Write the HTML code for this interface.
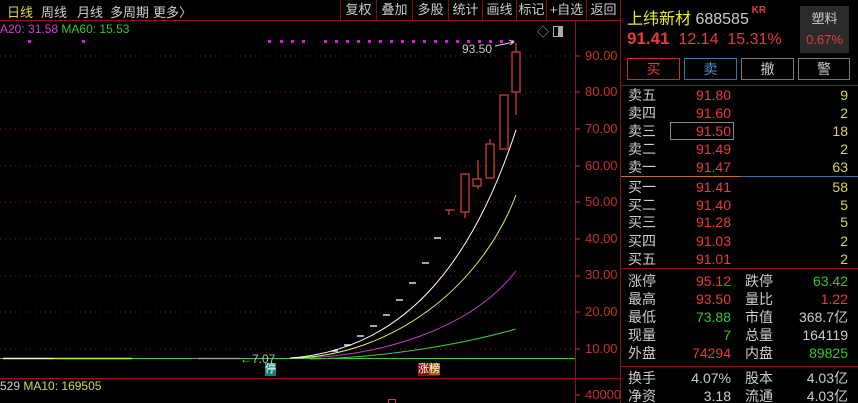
<!DOCTYPE html>
<html><head><meta charset="utf-8">
<style>
*{margin:0;padding:0;box-sizing:border-box}
html,body{width:858px;height:403px;overflow:hidden}
body{background:#000;position:relative;font-family:"Liberation Sans","Noto Sans CJK SC",sans-serif;font-size:13px;color:#ccc}
.a{position:absolute;white-space:nowrap}
.tb{position:absolute;top:0;height:20px;line-height:20px;font-size:13px;color:#ccc;text-align:center;border-left:1px solid #7a1010}
.r{color:#e83b3b}.g{color:#35c435}.y{color:#d8d84a}.w{color:#ccc}
.ax{position:absolute;left:585px;color:#c83030;font-size:13px}
.lb{position:absolute;left:628px;white-space:nowrap}
.vr{position:absolute;text-align:right;white-space:nowrap}
</style></head><body>
<div class="a" style="left:7px;top:2px;color:#d8d84a">日线</div>
<div class="a" style="left:41px;top:2px">周线</div>
<div class="a" style="left:77px;top:2px">月线</div>
<div class="a" style="left:110px;top:2px">多周期</div>
<div class="a" style="left:153px;top:2px">更多〉</div>
<div class="tb" style="left:340px;width:36px">复权</div>
<div class="tb" style="left:376px;width:36px">叠加</div>
<div class="tb" style="left:412px;width:36px">多股</div>
<div class="tb" style="left:448px;width:34px">统计</div>
<div class="tb" style="left:482px;width:34px">画线</div>
<div class="tb" style="left:516px;width:30px">标记</div>
<div class="tb" style="left:546px;width:40px">+自选</div>
<div class="tb" style="left:586px;width:34px">返回</div>
<div class="a" style="left:0;top:20px;width:620px;height:1px;background:#8a1515"></div>
<div class="a" style="left:620px;top:0;width:1px;height:403px;background:#8a1515"></div>
<div class="a" style="left:575px;top:20px;width:1px;height:383px;background:#8a1515"></div>
<div class="a" style="left:0;top:378px;width:620px;height:1px;background:#8a1515"></div>

<div class="a" style="left:0;top:22px;font-size:12px"><span style="color:#d040d0">A20: 31.58</span> <span class="g">MA60: 15.53</span></div>
<div class="a" style="left:537px;top:23px;color:#aaa;font-size:12px">◇</div>
<div class="a" style="left:553px;top:26px;width:10px;height:11px;border:1px solid #aaa"><div style="position:absolute;right:0;top:0;width:4px;height:9px;background:#aaa"></div></div>
<div class="a" style="left:462px;top:42px;color:#ccc;font-size:12px">93.50</div>

<div class="ax" style="top:48px">90.00</div>
<div class="ax" style="top:84px">80.00</div>
<div class="ax" style="top:121px">70.00</div>
<div class="ax" style="top:158px">60.00</div>
<div class="ax" style="top:194px">50.00</div>
<div class="ax" style="top:231px">40.00</div>
<div class="ax" style="top:267px">30.00</div>
<div class="ax" style="top:304px">20.00</div>
<div class="ax" style="top:341px">10.00</div>
<div class="ax" style="top:387px">40000</div>

<svg class="a" style="left:0;top:0" width="620" height="403">
<g stroke="#8a2020" stroke-dasharray="1 4">
<line x1="0" y1="56" x2="575" y2="56"/><line x1="0" y1="92" x2="575" y2="92"/><line x1="0" y1="129" x2="575" y2="129"/><line x1="0" y1="166" x2="575" y2="166"/><line x1="0" y1="202" x2="575" y2="202"/><line x1="0" y1="239" x2="575" y2="239"/><line x1="0" y1="276" x2="575" y2="276"/><line x1="0" y1="312" x2="575" y2="312"/><line x1="0" y1="349" x2="575" y2="349"/>
</g>
<g stroke="#c83030"><line x1="575" y1="56" x2="580" y2="56"/><line x1="575" y1="92" x2="580" y2="92"/><line x1="575" y1="129" x2="580" y2="129"/><line x1="575" y1="166" x2="580" y2="166"/><line x1="575" y1="202" x2="580" y2="202"/><line x1="575" y1="239" x2="580" y2="239"/><line x1="575" y1="276" x2="580" y2="276"/><line x1="575" y1="312" x2="580" y2="312"/><line x1="575" y1="349" x2="580" y2="349"/><line x1="575" y1="395" x2="580" y2="395"/></g>
<g fill="#d020d0">
<rect x="28" y="40" width="3" height="3"/><rect x="82" y="40" width="3" height="3"/><rect x="268" y="40" width="3" height="3"/><rect x="280" y="40" width="3" height="3"/><rect x="291" y="40" width="3" height="3"/><rect x="302" y="40" width="3" height="3"/><rect x="324" y="40" width="3" height="3"/><rect x="335" y="40" width="3" height="3"/><rect x="346" y="40" width="3" height="3"/><rect x="357" y="40" width="3" height="3"/><rect x="368" y="40" width="3" height="3"/><rect x="379" y="40" width="3" height="3"/><rect x="390" y="40" width="3" height="3"/><rect x="401" y="40" width="3" height="3"/><rect x="412" y="40" width="3" height="3"/><rect x="423" y="40" width="3" height="3"/><rect x="434" y="40" width="3" height="3"/>
<rect x="445" y="40" width="3" height="3"/><rect x="456" y="40" width="3" height="3"/><rect x="467" y="40" width="3" height="3"/><rect x="478" y="40" width="3" height="3"/><rect x="489" y="40" width="3" height="3"/><rect x="500" y="40" width="3" height="3"/><rect x="511" y="40" width="3" height="3"/>
</g>
<path d="M495 46 L514 42 M509 40 L514 42 L510 45" stroke="#ccc" fill="none"/>
<line x1="0" y1="358.5" x2="575" y2="358.5" stroke="#3ec83e" stroke-width="1"/>
<line x1="3" y1="358.5" x2="54" y2="358.5" stroke="#e8ffb0" stroke-width="1.5"/>
<line x1="54" y1="358.5" x2="132" y2="358.5" stroke="#aaff22" stroke-width="1.5"/>
<line x1="198" y1="358.5" x2="240" y2="358.5" stroke="#999" stroke-width="1.5"/>
<path d="M310 359 C380 358 460 345 516 329" stroke="#3ec83e" fill="none"/>
<path d="M300 358 C380 356 470 330 516 271" stroke="#c040c0" fill="none"/>
<path d="M295 358 C390 355 480 290 516 195" stroke="#e8e870" fill="none"/>
<path d="M290 358 C400 350 470 270 516 130" stroke="#fff" fill="none"/>
<g stroke="#fff" stroke-width="1.3">
<line x1="331" y1="351" x2="338" y2="351"/><line x1="344" y1="345" x2="351" y2="345"/><line x1="357" y1="336" x2="364" y2="336"/><line x1="370" y1="326" x2="377" y2="326"/><line x1="383" y1="315" x2="390" y2="315"/><line x1="396" y1="300" x2="403" y2="300"/><line x1="409" y1="283" x2="416" y2="283"/><line x1="422" y1="263" x2="429" y2="263"/><line x1="434" y1="238" x2="441" y2="238"/>
</g>
<g stroke="#e04040" fill="#000" stroke-width="1.2">
<line x1="449" y1="210" x2="449" y2="215"/><line x1="445" y1="210" x2="455" y2="210"/>
<line x1="465" y1="207" x2="465" y2="218"/><rect x="461" y="174" width="8" height="38"/>
<line x1="478" y1="160" x2="478" y2="189"/><rect x="473" y="179" width="8" height="7"/>
<line x1="490" y1="139" x2="490" y2="176"/><rect x="486" y="144" width="8" height="34"/>
<rect x="500" y="95" width="8" height="54"/>
<line x1="516" y1="43" x2="516" y2="52"/><line x1="516" y1="92" x2="516" y2="115"/><rect x="512" y="52" width="8" height="40"/>
</g>
</svg>
<div class="a" style="left:240px;top:352px;color:#bbb;font-size:12px">←7.07</div>
<div class="a" style="left:265px;top:363px;width:11px;height:13px;background:#0e8080;color:#fff;font-size:11px;line-height:13px;text-align:center">停</div>
<div class="a" style="left:418px;top:363px;width:21px;height:13px;background:#8a1010;color:#fff;font-size:11px;line-height:13px"><span>涨</span><span style="background:#a06010">榜</span></div>
<div class="a" style="left:0;top:379px;font-size:12px"><span class="w">529</span> <span class="y">MA10: 169505</span></div>
<div class="a" style="left:388px;top:399px;width:8px;height:6px;border:1px solid #e04040"></div>

<div class="a" style="left:627px;top:5px;font-size:16px;color:#e8e830">上纬新材 <span style="color:#ccc">688585</span><span style="color:#e83b3b;font-size:10px;font-weight:bold;vertical-align:top"> KR</span></div>
<div class="a" style="left:627px;top:29px;font-size:16px;color:#e83b3b"><b style="font-size:17px">91.41</b>&nbsp; 12.14&nbsp; 15.31%</div>
<div class="a" style="left:800px;top:6px;width:49px;height:47px;background:#2a2a2a;text-align:center;font-size:13px;line-height:21px;padding-top:2px">塑料<br><span class="r">0.67%</span></div>
<div class="a" style="left:627px;top:58px;width:53px;height:22px;border:1px solid #c83030;color:#e83b3b;text-align:center;line-height:20px;font-size:14px">买</div>
<div class="a" style="left:684px;top:58px;width:53px;height:22px;border:1px solid #3a70b0;color:#5090e0;text-align:center;line-height:20px;font-size:14px">卖</div>
<div class="a" style="left:741px;top:58px;width:53px;height:22px;border:1px solid #777;color:#ccc;text-align:center;line-height:20px;font-size:14px">撤</div>
<div class="a" style="left:798px;top:58px;width:52px;height:22px;border:1px solid #777;color:#ccc;text-align:center;line-height:20px;font-size:14px">警</div>
<div class="a" style="left:621px;top:85px;width:237px;height:1px;background:#8a1515"></div>
<div class="a" style="left:621px;top:176px;width:120px;height:1px;background:#c87030"></div>
<div class="a" style="left:741px;top:176px;width:117px;height:1px;background:#3a70b0"></div>
<div class="a" style="left:621px;top:268px;width:237px;height:1px;background:#8a1515"></div>
<div class="a" style="left:621px;top:366px;width:237px;height:1px;background:#8a1515"></div>
<div class="a" style="left:670px;top:122px;width:64px;height:18px;border:1px solid #888"></div>

<div style="position:absolute;left:0;top:0;width:858px;height:403px;line-height:18px;font-size:14px">
<div class="lb" style="top:86px">卖五</div><div class="lb" style="top:104px">卖四</div><div class="lb" style="top:122px">卖三</div><div class="lb" style="top:140px">卖二</div><div class="lb" style="top:158px">卖一</div>
<div class="lb" style="top:178px">买一</div><div class="lb" style="top:196px">买二</div><div class="lb" style="top:213px">买三</div><div class="lb" style="top:232px">买四</div><div class="lb" style="top:250px">买五</div>
<div class="vr r" style="right:127px;top:86px">91.80</div><div class="vr r" style="right:127px;top:104px">91.60</div><div class="vr r" style="right:127px;top:122px">91.50</div><div class="vr r" style="right:127px;top:140px">91.49</div><div class="vr r" style="right:127px;top:158px">91.47</div>
<div class="vr r" style="right:127px;top:178px">91.41</div><div class="vr r" style="right:127px;top:196px">91.40</div><div class="vr r" style="right:127px;top:213px">91.28</div><div class="vr r" style="right:127px;top:232px">91.03</div><div class="vr r" style="right:127px;top:250px">91.01</div>
<div class="vr y" style="right:10px;top:86px">9</div><div class="vr y" style="right:10px;top:104px">2</div><div class="vr y" style="right:10px;top:122px">18</div><div class="vr y" style="right:10px;top:140px">2</div><div class="vr y" style="right:10px;top:158px">63</div>
<div class="vr y" style="right:10px;top:178px">58</div><div class="vr y" style="right:10px;top:196px">5</div><div class="vr y" style="right:10px;top:213px">5</div><div class="vr y" style="right:10px;top:232px">2</div><div class="vr y" style="right:10px;top:250px">2</div>

<div class="lb" style="top:272px">涨停</div><div class="lb" style="top:290px">最高</div><div class="lb" style="top:308px">最低</div><div class="lb" style="top:326px">现量</div><div class="lb" style="top:344px">外盘</div>
<div class="vr r" style="right:127px;top:272px">95.12</div><div class="vr r" style="right:127px;top:290px">93.50</div><div class="vr g" style="right:127px;top:308px">73.88</div><div class="vr g" style="right:127px;top:326px">7</div><div class="vr r" style="right:127px;top:344px">74294</div>
<div class="lb" style="left:745px;top:272px">跌停</div><div class="lb" style="left:745px;top:290px">量比</div><div class="lb" style="left:745px;top:308px">市值</div><div class="lb" style="left:745px;top:326px">总量</div><div class="lb" style="left:745px;top:344px">内盘</div>
<div class="vr g" style="right:10px;top:272px">63.42</div><div class="vr r" style="right:10px;top:290px">1.22</div><div class="vr w" style="right:10px;top:308px">368.7亿</div><div class="vr w" style="right:10px;top:326px">164119</div><div class="vr g" style="right:10px;top:344px">89825</div>
<div class="lb" style="top:369px">换手</div><div class="lb" style="top:387px">净资</div>
<div class="vr w" style="right:127px;top:369px">4.07%</div><div class="vr w" style="right:127px;top:387px">3.18</div>
<div class="lb" style="left:745px;top:369px">股本</div><div class="lb" style="left:745px;top:387px">流通</div>
<div class="vr w" style="right:10px;top:369px">4.03亿</div><div class="vr w" style="right:10px;top:387px">4.03亿</div>
</div>
</body></html>
